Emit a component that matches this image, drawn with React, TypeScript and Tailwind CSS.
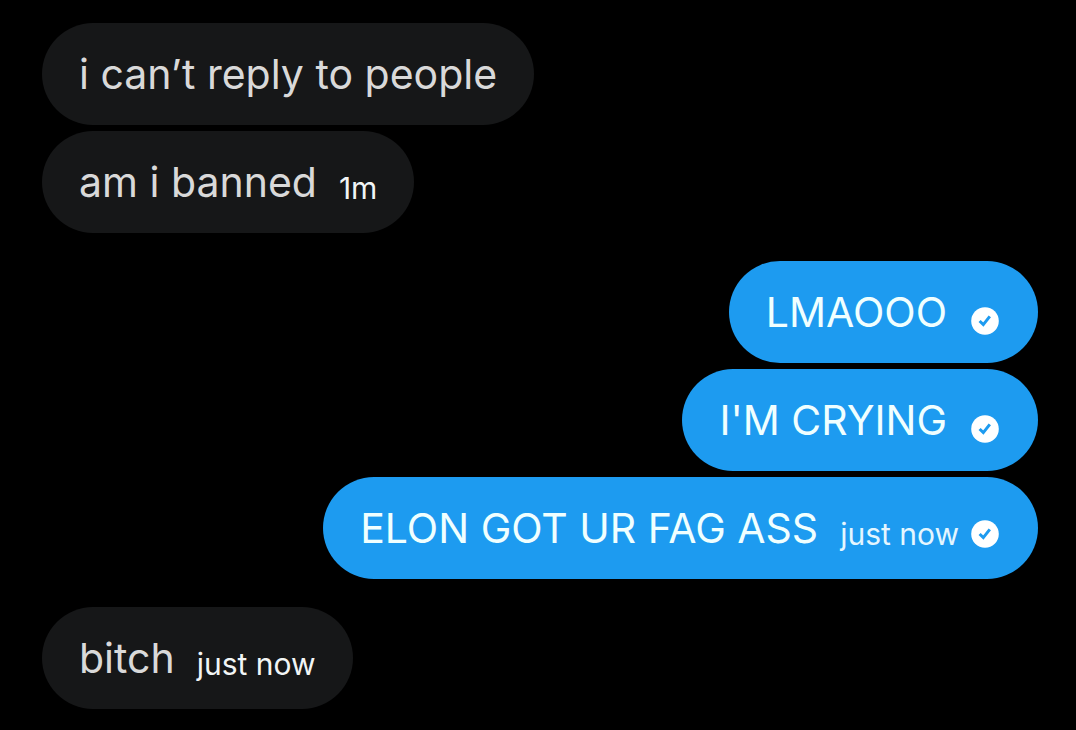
import clsx from "clsx";

type Message = {
  text: string;
  time?: string;
  sent?: boolean;
};

const groups: Message[][] = [
  [{ text: "i can’t reply to people" }, { text: "am i banned", time: "1m" }],
  [
    { text: "LMAOOO", sent: true },
    { text: "I'M CRYING", sent: true },
    { text: "ELON GOT UR FAG ASS", time: "just now", sent: true },
  ],
  [{ text: "bitch", time: "just now" }],
];

function SentIcon() {
  return (
    <svg viewBox="0 0 28 28" className="size-7" role="img" aria-label="Sent">
      <circle cx="14" cy="14" r="13.8" fill="#fff" />
      <path
        d="M8.6 14 12.3 17.6 18.8 9.3"
        fill="none"
        stroke="#1d9bf0"
        strokeWidth="3"
      />
    </svg>
  );
}

function Bubble({ text, time, sent }: Message) {
  return (
    <li
      className={clsx(
        "flex items-end rounded-[51px] py-[23px] pl-[37px]",
        sent
          ? "self-end bg-[#1d9bf0] pr-[39px]"
          : "self-start bg-[#161718] pr-[37px]"
      )}
    >
      <p
        className={clsx(
          "text-[41px] leading-[56px]",
          sent ? "text-[#f0ffff]" : "text-[#d9d9d9]"
        )}
      >
        {text}
      </p>
      {time && (
        <time
          className={clsx(
            "ml-[22px] text-[30px] leading-[44px]",
            sent ? "text-[#e4f6ff]" : "text-[#f2f5f5]"
          )}
        >
          {time}
        </time>
      )}
      {sent && (
        <span
          className={clsx(
            "flex items-center",
            time ? "ml-3 h-11" : "ml-6 h-[38px]"
          )}
        >
          <SentIcon />
        </span>
      )}
    </li>
  );
}

export default function App() {
  return (
    <main className="flex min-h-screen flex-col gap-7 bg-black pt-[23px] pr-[38px] pb-[21px] pl-[42px] font-['Inter',sans-serif]">
      {groups.map((messages, i) => (
        <ul key={i} className="flex flex-col gap-1.5">
          {messages.map((message) => (
            <Bubble key={message.text} {...message} />
          ))}
        </ul>
      ))}
    </main>
  );
}
